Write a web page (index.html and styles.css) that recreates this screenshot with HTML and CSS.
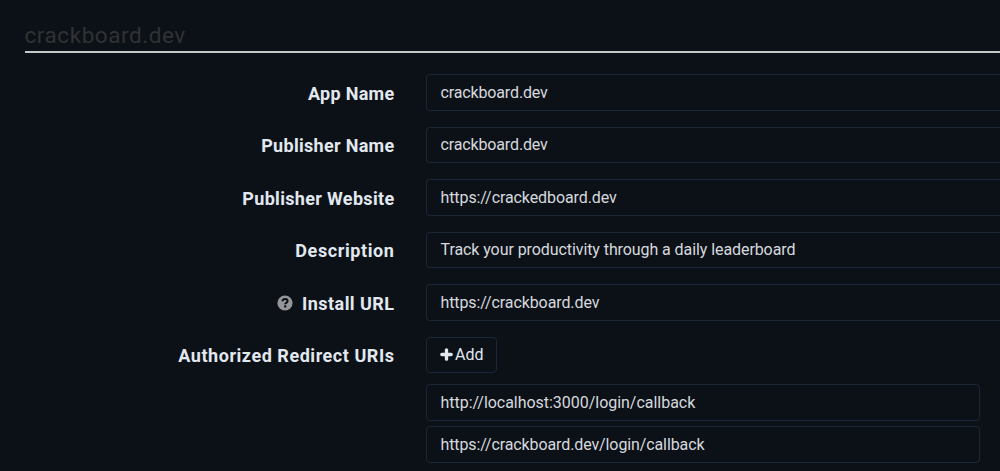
FILE: index.html
```html
<!DOCTYPE html>
<html lang="en">
<head>
<meta charset="utf-8">
<title>crackboard.dev</title>
<link rel="stylesheet" href="styles.css">
</head>
<body>
<main class="app-settings">
  <h1 class="legend"><span class="t-title">crackboard.dev</span></h1>
  <div class="row"><div class="label"><span class="l-app">App Name</span></div><div class="field"><span class="v-name">crackboard.dev</span></div></div>
  <div class="row"><div class="label"><span class="l-pub">Publisher Name</span></div><div class="field"><span class="v-name">crackboard.dev</span></div></div>
  <div class="row"><div class="label"><span class="l-site">Publisher Website</span></div><div class="field"><span class="v-site">https://crackedboard.dev</span></div></div>
  <div class="row"><div class="label"><span class="l-desc">Description</span></div><div class="field"><span class="v-desc">Track your productivity through a daily leaderboard</span></div></div>
  <div class="row"><div class="label"><svg class="help" viewBox="0 0 16 16"><circle cx="8" cy="8" r="7.6" fill="#94969a"/><path d="M5.4 6.2C5.7 4.7 6.6 4.1 8 4.1c1.5 0 2.6.8 2.6 2.1 0 1.7-2.4 1.6-2.4 3.1" fill="none" stroke="#0c1117" stroke-width="2"/><path d="M7.1 10.3h2.2v2.2H7.1z" fill="#0c1117"/></svg><span class="l-install">Install URL</span></div><div class="field"><span class="v-install">https://crackboard.dev</span></div></div>
  <div class="row"><div class="label"><span class="l-auth">Authorized Redirect URIs</span></div><div class="button"><svg class="plus" viewBox="0 0 12 12"><path d="M6 1.7v8.6M1.7 6h8.6" fill="none" stroke="#e2e8f0" stroke-width="3.1" stroke-linecap="round"/></svg><span class="v-add">Add</span></div></div>
  <div class="uris">
    <div class="field"><span class="v-local">http://localhost:3000/login/callback</span></div>
    <div class="field"><span class="v-call">https://crackboard.dev/login/callback</span></div>
  </div>
</main>
</body>
</html>
```
FILE: styles.css
```css
* { box-sizing: border-box; }
body {
  margin: 0;
  height: 471px;
  overflow: hidden;
  background: #0c1117;
  color: #d6d9df;
  font: 16px/24px Roboto, "Liberation Sans", sans-serif;
}
.app-settings { padding-top: 18px; }
.legend {
  margin: 0 0 21.5px 24.5px;
  height: 34.5px;
  border-bottom: 2px solid #c3c9c7;
  color: #303234;
  font-size: 22.5px;
  font-weight: 400;
  line-height: 34px;
}
.row {
  display: grid;
  grid-template-columns: 394.5px 1fr;
  column-gap: 31.5px;
  height: 36.5px;
  margin-bottom: 16px;
}
.label {
  display: flex;
  justify-content: flex-end;
  align-items: center;
  padding-top: 3px;
  color: #e2e8f0;
  font-size: 18px;
  font-weight: 700;
  white-space: nowrap;
}
.help { width: 16px; height: 16px; margin: 0 9px 1px 0; }
.field, .button {
  display: flex;
  align-items: center;
  height: 36.5px;
  padding: 1px 13.5px 0;
  border: 1px solid #1b2636;
  border-radius: 4px;
  white-space: nowrap;
}
.row .field { border-right: 0; border-radius: 4px 0 0 4px; }
.button { width: 71px; color: #e2e8f0; }
.plus { width: 13px; height: 13px; margin: 0 2px 1px -.5px; flex: none; }
.uris {
  display: flex;
  flex-direction: column;
  gap: 5.5px;
  width: 554px;
  margin: -5px 0 0 426px;
}
.t-title { letter-spacing: .55px; }
.l-app { letter-spacing: .3px; }
.l-pub { letter-spacing: .3px; }
.l-site { letter-spacing: .33px; }
.l-desc { letter-spacing: .6px; }
.l-install { letter-spacing: .45px; }
.l-auth { letter-spacing: .54px; }
.v-name { letter-spacing: -.14px; }
.v-site { letter-spacing: -.09px; }
.v-desc { letter-spacing: -.08px; }
.v-install { letter-spacing: -.1px; }
.v-local { letter-spacing: -.03px; }
.v-call { letter-spacing: -.11px; }
```
